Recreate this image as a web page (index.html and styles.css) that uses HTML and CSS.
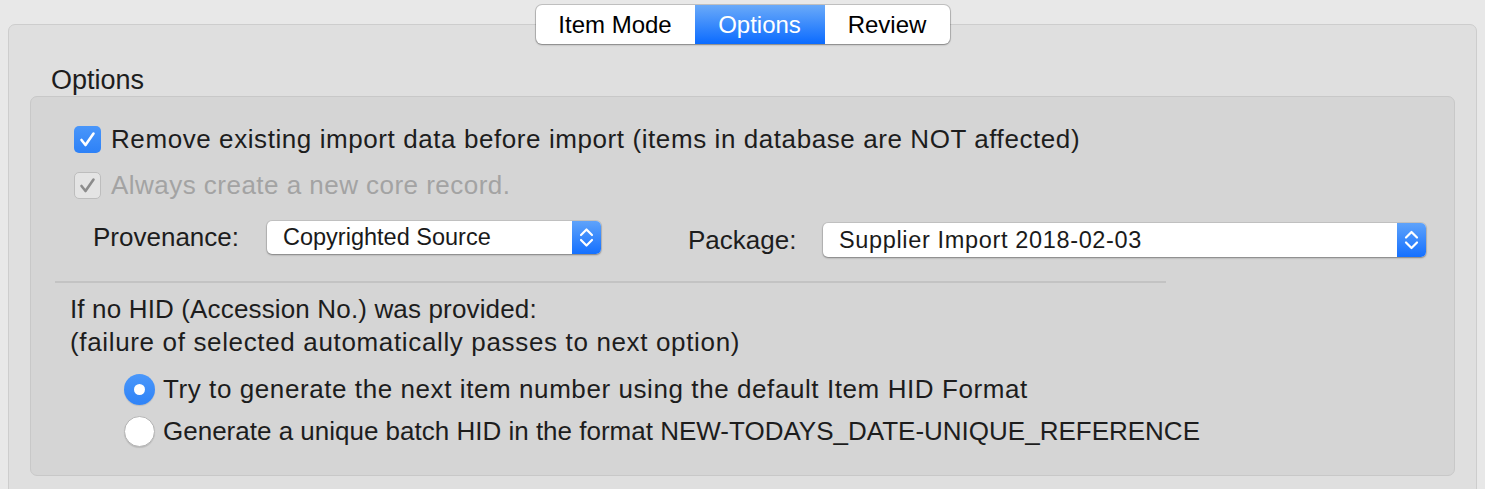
FILE: index.html
```html
<!DOCTYPE html>
<html lang="en">
  <head>
    <meta charset="UTF-8" />
    <meta name="viewport" content="width=device-width, initial-scale=1.0" />
    <title>Import Options</title>
    <link rel="stylesheet" href="styles.css">
  </head>
  <body>
    <div class="window">
      <!-- Segmented tab control -->
      <div class="tabs">
        <div class="segments">
          <div class="segment">Item Mode</div>
          <div class="segment active">Options</div>
          <div class="segment">Review</div>
        </div>
      </div>

      <!-- Tab panel -->
      <div class="panel">
        <div class="panel-title">Options</div>

        <div class="group">
          <!-- Checkboxes -->
          <div class="check-row">
            <span class="checkbox on">
              <svg width="27" height="27" viewBox="0 0 27 27"><polyline points="7.5,14 11.5,19 19.5,7.5" fill="none" stroke="#fff" stroke-width="2.6" stroke-linecap="round" stroke-linejoin="round"/></svg>
            </span>
            <span class="check-label">Remove existing import data before import (items in database are NOT affected)</span>
          </div>
          <div class="check-row disabled">
            <span class="checkbox off">
              <svg width="27" height="27" viewBox="0 0 27 27"><polyline points="7.5,14 11.5,19 19.5,7.5" fill="none" stroke="#8c8c8c" stroke-width="2.6" stroke-linecap="round" stroke-linejoin="round"/></svg>
            </span>
            <span class="check-label">Always create a new core record.</span>
          </div>

          <!-- Popup buttons -->
          <div class="select-row">
            <div class="field provenance">
              <label class="field-label">Provenance:</label>
              <div class="select">
                <span class="select-value">Copyrighted Source</span>
                <span class="stepper">
                  <svg width="29" height="33" viewBox="0 0 29 33"><polyline points="9,14 14.5,8.5 20,14" fill="none" stroke="#fff" stroke-width="2.2" stroke-linecap="round" stroke-linejoin="round"/><polyline points="9,19 14.5,24.5 20,19" fill="none" stroke="#fff" stroke-width="2.2" stroke-linecap="round" stroke-linejoin="round"/></svg>
                </span>
              </div>
            </div>
            <div class="field package">
              <label class="field-label">Package:</label>
              <div class="select">
                <span class="select-value">Supplier Import 2018-02-03</span>
                <span class="stepper">
                  <svg width="29" height="34" viewBox="0 0 29 34"><polyline points="9,14.5 14.5,9 20,14.5" fill="none" stroke="#fff" stroke-width="2.2" stroke-linecap="round" stroke-linejoin="round"/><polyline points="9,19.5 14.5,25 20,19.5" fill="none" stroke="#fff" stroke-width="2.2" stroke-linecap="round" stroke-linejoin="round"/></svg>
                </span>
              </div>
            </div>
          </div>

          <div class="separator"></div>

          <div class="hint">
            <div class="hint-line">If no HID (Accession No.) was provided:</div>
            <div class="hint-line second">(failure of selected automatically passes to next option)</div>
          </div>

          <!-- Radio buttons -->
          <div class="radio-row first">
            <span class="radio on"></span>
            <span class="radio-label">Try to generate the next item number using the default Item HID Format</span>
          </div>
          <div class="radio-row">
            <span class="radio"></span>
            <span class="radio-label caps">Generate a unique batch HID in the format NEW-TODAYS_DATE-UNIQUE_REFERENCE</span>
          </div>
        </div>
      </div>
    </div>
  </body>
</html>
```

FILE: styles.css
```css
/* General styles */
body {
    margin: 0;
    padding: 0;
    background: #e8e8e8;
    font-family: "Liberation Sans", Arial, sans-serif;
    color: #1d1d1d;
    overflow: hidden;
}

.window {
    padding: 5px 8px 0;
}

/* Segmented control */
.tabs {
    display: flex;
    justify-content: center;
    position: relative;
    z-index: 1;
}

.segments {
    display: flex;
    height: 39px;
    background: #fff;
    border-radius: 6px;
    box-shadow: 0 0 0 1px rgba(0, 0, 0, 0.16), 0 1px 2px rgba(0, 0, 0, 0.3);
    overflow: hidden;
}

.segment {
    display: flex;
    align-items: center;
    justify-content: center;
    font-size: 24px;
    color: #000;
}

.segment:nth-child(1) {
    width: 159px;
}

.segment:nth-child(2) {
    width: 130px;
}

.segment:nth-child(3) {
    width: 125px;
}

.segment.active {
    background: linear-gradient(#6aaaf9, #0b6bff);
    color: #fff;
}

/* Tab panel */
.panel {
    margin-top: -20px;
    height: 520px;
    padding: 40px 21px 0;
    background: #dfdfdf;
    border: 1px solid #cdcdcd;
    border-radius: 7px;
}

.panel-title {
    margin-left: 21px;
    font-size: 27px;
    line-height: 31px;
}

/* Inner group box */
.group {
    padding: 29px 0 28px;
    background: #d5d5d5;
    border: 1px solid #c8c8c8;
    border-radius: 7px;
    font-size: 26px;
}

/* Checkboxes */
.check-row {
    display: flex;
    align-items: center;
    height: 27px;
    margin-left: 43px;
    letter-spacing: 0.58px;
}

.check-row + .check-row {
    margin-top: 19px;
}

.checkbox {
    width: 27px;
    height: 27px;
    margin-right: 10px;
    border-radius: 5px;
    box-sizing: border-box;
}

.checkbox svg {
    display: block;
}

.checkbox.on {
    background: linear-gradient(#4996fa, #2d81f7);
}

.checkbox.off {
    background: #e4e4e4;
    border: 1px solid #bdbdbd;
}

.checkbox.off svg {
    margin: -1px;
}

.check-row.disabled {
    letter-spacing: 0.47px;
}

.check-row.disabled .check-label {
    color: #a3a3a3;
}

/* Popup buttons */
.select-row {
    display: flex;
    align-items: flex-start;
    margin-top: 22px;
    padding-left: 62px;
}

.field {
    display: flex;
    align-items: center;
}

.field.provenance .field-label {
    width: 174px;
}

.field.package {
    margin-left: 87px;
    margin-top: 2px;
}

.field.package .field-label {
    width: 135px;
}

.select {
    display: flex;
    align-items: stretch;
    height: 33px;
    background: #fff;
    border-radius: 5px;
    box-shadow: 0 0 0 1px rgba(0, 0, 0, 0.08), 0 1px 2px rgba(0, 0, 0, 0.35);
    overflow: hidden;
}

.provenance .select {
    width: 334px;
}

.package .select {
    width: 603px;
    height: 34px;
}

.select-value {
    flex: 1;
    display: flex;
    align-items: center;
    padding-left: 16px;
    font-size: 23.5px;
    color: #1a1a1a;
}

.package .select-value {
    letter-spacing: 0.65px;
}

.stepper {
    width: 29px;
    background: linear-gradient(#5fa3fa, #1470ff);
}

.stepper svg {
    display: block;
}

/* Separator */
.separator {
    width: 1111px;
    height: 2px;
    margin: 24px 0 0 24px;
    background: #c3c3c3;
}

.hint {
    margin: 10px 0 0 39px;
    line-height: 33px;
    letter-spacing: 0.15px;
}

.hint-line.second {
    letter-spacing: 0.65px;
}

/* Radio buttons */
.radio-row {
    display: flex;
    align-items: center;
    height: 31px;
    margin-left: 93px;
    margin-top: 11px;
    letter-spacing: 0.58px;
}

.radio-row.first {
    margin-top: 15px;
}

.radio-label.caps {
    letter-spacing: 0;
}

.radio {
    width: 31px;
    height: 31px;
    margin-right: 8px;
    border-radius: 50%;
    box-sizing: border-box;
    background: #fff;
    border: 1px solid #b5b5b5;
    box-shadow: 0 1px 1px rgba(0, 0, 0, 0.12);
}

.radio.on {
    position: relative;
    background: linear-gradient(#4a97fa, #2f83f7);
    border: none;
}

.radio.on::after {
    content: "";
    position: absolute;
    top: 10px;
    left: 10px;
    width: 11px;
    height: 11px;
    border-radius: 50%;
    background: #fff;
}
```
